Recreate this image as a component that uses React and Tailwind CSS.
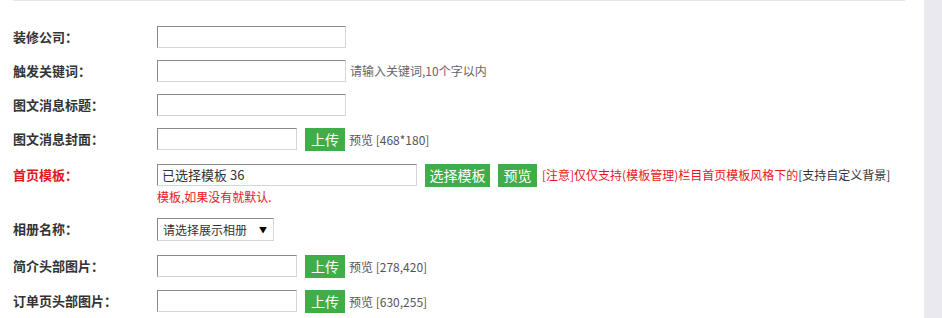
import React from "react";

const font = { fontFamily: '"Noto Sans CJK SC", "Microsoft YaHei", sans-serif' };

function Label({ children, red }) {
  return (
    <div
      className={
        "w-[144px] shrink-0 text-[13px] font-bold leading-[21px] " +
        (red ? "text-[#e5171d]" : "text-[#333]")
      }
    >
      {children}
    </div>
  );
}

function TextInput({ w = "w-[189px]", value = "" }) {
  return (
    <div
      className={
        w +
        " h-[22px] bg-white border border-t-[#8a8a8a] border-l-[#8a8a8a] border-r-[#d6d6d6] border-b-[#d6d6d6] text-[13px] leading-[20px] px-[4px] text-[#333]"
      }
    >
      {value}
    </div>
  );
}

function GreenBtn({ children, w }) {
  return (
    <div
      className={
        w +
        " h-[23px] bg-[#40ad48] text-white text-[14px] leading-[23px] text-center shrink-0"
      }
    >
      {children}
    </div>
  );
}

function UploadRow({ label, size, h }) {
  return (
    <div className={"flex items-start " + h}>
      <Label>{label}</Label>
      <TextInput w="w-[140px]" />
      <div className="ml-[8px]">
        <GreenBtn w="w-[40px]">上传</GreenBtn>
      </div>
      <span className="ml-[4px] text-[12px] leading-[23px] text-[#555]">预览 {size}</span>
    </div>
  );
}

export default function App() {
  return (
    <div className="flex w-[942px] h-[318px] bg-white overflow-hidden" style={font}>
      <div className="flex-1">
        <div className="ml-[13px] w-[892px] border-t border-[#e6e6e6]" />
        <div className="pl-[13px] pt-[25px]">
          <div className="flex items-start h-[34px]">
            <Label>装修公司：</Label>
            <TextInput />
          </div>
          <div className="flex items-start h-[34px]">
            <Label>触发关键词：</Label>
            <TextInput />
            <span className="ml-[4px] text-[12px] leading-[22px] text-[#666]">
              请输入关键词,10个字以内
            </span>
          </div>
          <div className="flex items-start h-[34px]">
            <Label>图文消息标题：</Label>
            <TextInput />
          </div>
          <UploadRow label="图文消息封面：" size="[468*180]" h="h-[36px]" />
          <div className="flex items-start h-[54px]">
            <Label red>首页模板：</Label>
            <div className="flex flex-col">
              <div className="flex items-start">
                <TextInput w="w-[260px]" value="已选择模板 36" />
                <div className="ml-[8px]">
                  <GreenBtn w="w-[65px]">选择模板</GreenBtn>
                </div>
                <div className="ml-[8px]">
                  <GreenBtn w="w-[39px]">预览</GreenBtn>
                </div>
                <span className="ml-[5px] text-[12px] leading-[22px] text-[#e5171d] whitespace-nowrap">
                  [注意]仅仅支持(模板管理)栏目首页模板风格下的
                  <span className="text-[#333]">[支持自定义背景]</span>
                </span>
              </div>
              <div className="text-[12px] leading-[20px] text-[#e5171d]">模板,如果没有就默认.</div>
            </div>
          </div>
          <div className="flex items-start h-[37px]">
            <Label>相册名称：</Label>
            <div className="w-[117px] h-[23px] bg-white border border-t-[#8a8a8a] border-l-[#8a8a8a] border-r-[#d6d6d6] border-b-[#d6d6d6] flex items-center pl-[5px]">
              <span className="text-[12px] text-[#333]">请选择展示相册</span>
              <span className="ml-auto mr-[6px] text-[8px] text-black">▼</span>
            </div>
          </div>
          <UploadRow label="简介头部图片：" size="[278,420]" h="h-[35px]" />
          <UploadRow label="订单页头部图片：" size="[630,255]" h="h-[35px]" />
        </div>
      </div>
      <div className="w-[18px] h-[318px] bg-[#e9e9ef]" />
    </div>
  );
}
